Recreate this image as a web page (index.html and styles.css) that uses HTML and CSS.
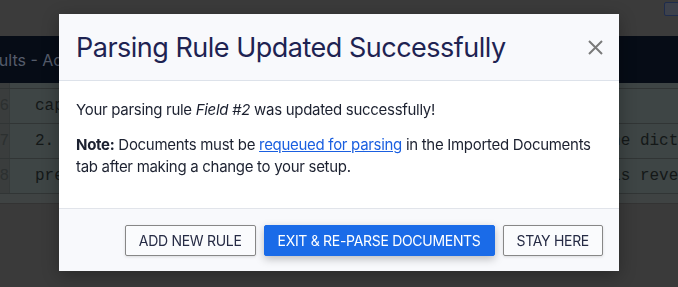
FILE: index.html
```html
<!DOCTYPE html>
<html lang="en">
<head>
    <meta charset="UTF-8">
    <title>Parsing Rule Updated</title>
    <link rel="stylesheet" href="styles.css">
</head>
<body>
    <div class="page">
        <div class="topbar">
            <span class="top-button"></span>
        </div>
        <div class="navbar">
            <span class="nav-title">Results - Add Parsing Rule</span>
        </div>
        <div class="table">
            <div class="row row-head">
                <div class="num"></div>
                <div class="cell"></div>
            </div>
            <div class="row">
                <div class="num">6</div>
                <div class="cell">capitalize the first letter of every word</div>
            </div>
            <div class="row">
                <div class="num">7</div>
                <div class="cell">2. Strip punctuation from the value, then match it against the dictionary</div>
            </div>
            <div class="row">
                <div class="num">8</div>
                <div class="cell">preserve the original casing of each token unless the value is reversed</div>
            </div>
            <div class="row row-foot"></div>
        </div>
    </div>

    <div class="modal">
        <div class="modal-header">
            <h2 class="modal-title">Parsing Rule Updated Successfully</h2>
            <button class="close-button" aria-label="Close">
                <svg width="15" height="15" viewBox="0 0 15 15">
                    <path d="M1 1 L14 14 M14 1 L1 14" stroke="#7a7a7a" stroke-width="2" fill="none"/>
                </svg>
            </button>
        </div>
        <div class="modal-body">
            <p>Your parsing rule <em>Field #2</em> was updated successfully!</p>
            <p><strong>Note:</strong> Documents must be <a href="#">requeued for parsing</a> in the Imported Documents tab after making a change to your setup.</p>
        </div>
        <div class="modal-footer">
            <button class="btn btn-outline">Add New Rule</button>
            <button class="btn btn-primary">Exit &amp; Re-Parse Documents</button>
            <button class="btn btn-outline">Stay Here</button>
        </div>
    </div>
</body>
</html>
```

FILE: styles.css
```css
body {
    margin: 0;
    font-family: Inter, "Noto Sans", sans-serif;
    background-color: #3a3a3a;
    height: 287px;
    overflow: hidden;
}

.topbar {
    height: 36px;
    background: #3b3b3b;
    display: flex;
    justify-content: flex-end;
    align-items: flex-start;
}

.top-button {
    width: 14px;
    height: 12px;
    margin-top: 2px;
    margin-right: -2px;
    border: 1px solid #1f2c4c;
    background: #3d414b;
    border-radius: 2px;
}

.navbar {
    height: 47px;
    background: #060c16;
    display: flex;
    align-items: center;
    overflow: hidden;
}

.nav-title {
    font-size: 16px;
    color: #555c6b;
    white-space: nowrap;
    margin-left: -29px;
    margin-top: 1px;
}

.table {
    font-family: "Liberation Mono", monospace;
    font-size: 16px;
    color: #141818;
}

.row {
    display: flex;
    height: 34px;
    border-top: 1px solid #313535;
    background: #3e4545;
}

.row-head {
    height: 5px;
    border-top: none;
}

.row-foot {
    height: 9px;
    background: #3f4343;
    border-bottom: 1px solid #333;
}

.num {
    width: 9px;
    flex-shrink: 0;
    background: #3a3d3d;
    border-right: 1px solid #353939;
    color: #2c3030;
    overflow: hidden;
    display: flex;
    align-items: center;
    justify-content: flex-end;
    text-indent: -5px;
}

.cell {
    flex-grow: 1;
    padding-left: 25px;
    white-space: pre;
    overflow: hidden;
    display: flex;
    align-items: center;
}

.modal {
    position: fixed;
    top: 14px;
    left: 59px;
    width: 560px;
    background: #ffffff;
    box-shadow: 0 4px 16px rgba(0, 0, 0, 0.3);
}

.modal-header {
    height: 66px;
    padding: 0 16px 0 17px;
    background: #f8f9fc;
    border-bottom: 1px solid #dde2ea;
    display: flex;
    align-items: center;
    justify-content: space-between;
}

.modal-title {
    margin: 0;
    font-size: 27px;
    font-weight: 400;
    color: #1e2352;
    letter-spacing: -0.5px;
}

.close-button {
    border: none;
    background: none;
    padding: 0;
    width: 15px;
    height: 15px;
    display: flex;
    cursor: pointer;
}

.modal-body {
    padding: 18px 17px 17px;
    font-size: 15px;
    line-height: 22px;
    letter-spacing: -0.3px;
    color: #1c2130;
}

.modal-body p {
    margin: 0 0 13px;
}

.modal-body a {
    color: #1a5fe0;
}

.modal-footer {
    height: 62px;
    padding: 0 16px;
    background: #f8f9fc;
    border-top: 1px solid #e1e4ea;
    display: flex;
    align-items: center;
    justify-content: flex-end;
    gap: 8px;
}

.btn {
    height: 31px;
    padding: 0 13px;
    font-family: Inter, "Noto Sans", sans-serif;
    font-size: 14px;
    letter-spacing: -0.3px;
    text-transform: uppercase;
    border-radius: 2px;
    cursor: pointer;
}

.btn-outline {
    background: #fafbfd;
    color: #262b45;
    border: 1px solid #878787;
    box-shadow: 0 1px 3px rgba(0, 0, 0, 0.12);
}

.btn-primary {
    background: #1a6be8;
    color: #ffffff;
    border: 1px solid #1a6be8;
    box-shadow: 0 3px 8px rgba(0, 0, 0, 0.25);
}
```
